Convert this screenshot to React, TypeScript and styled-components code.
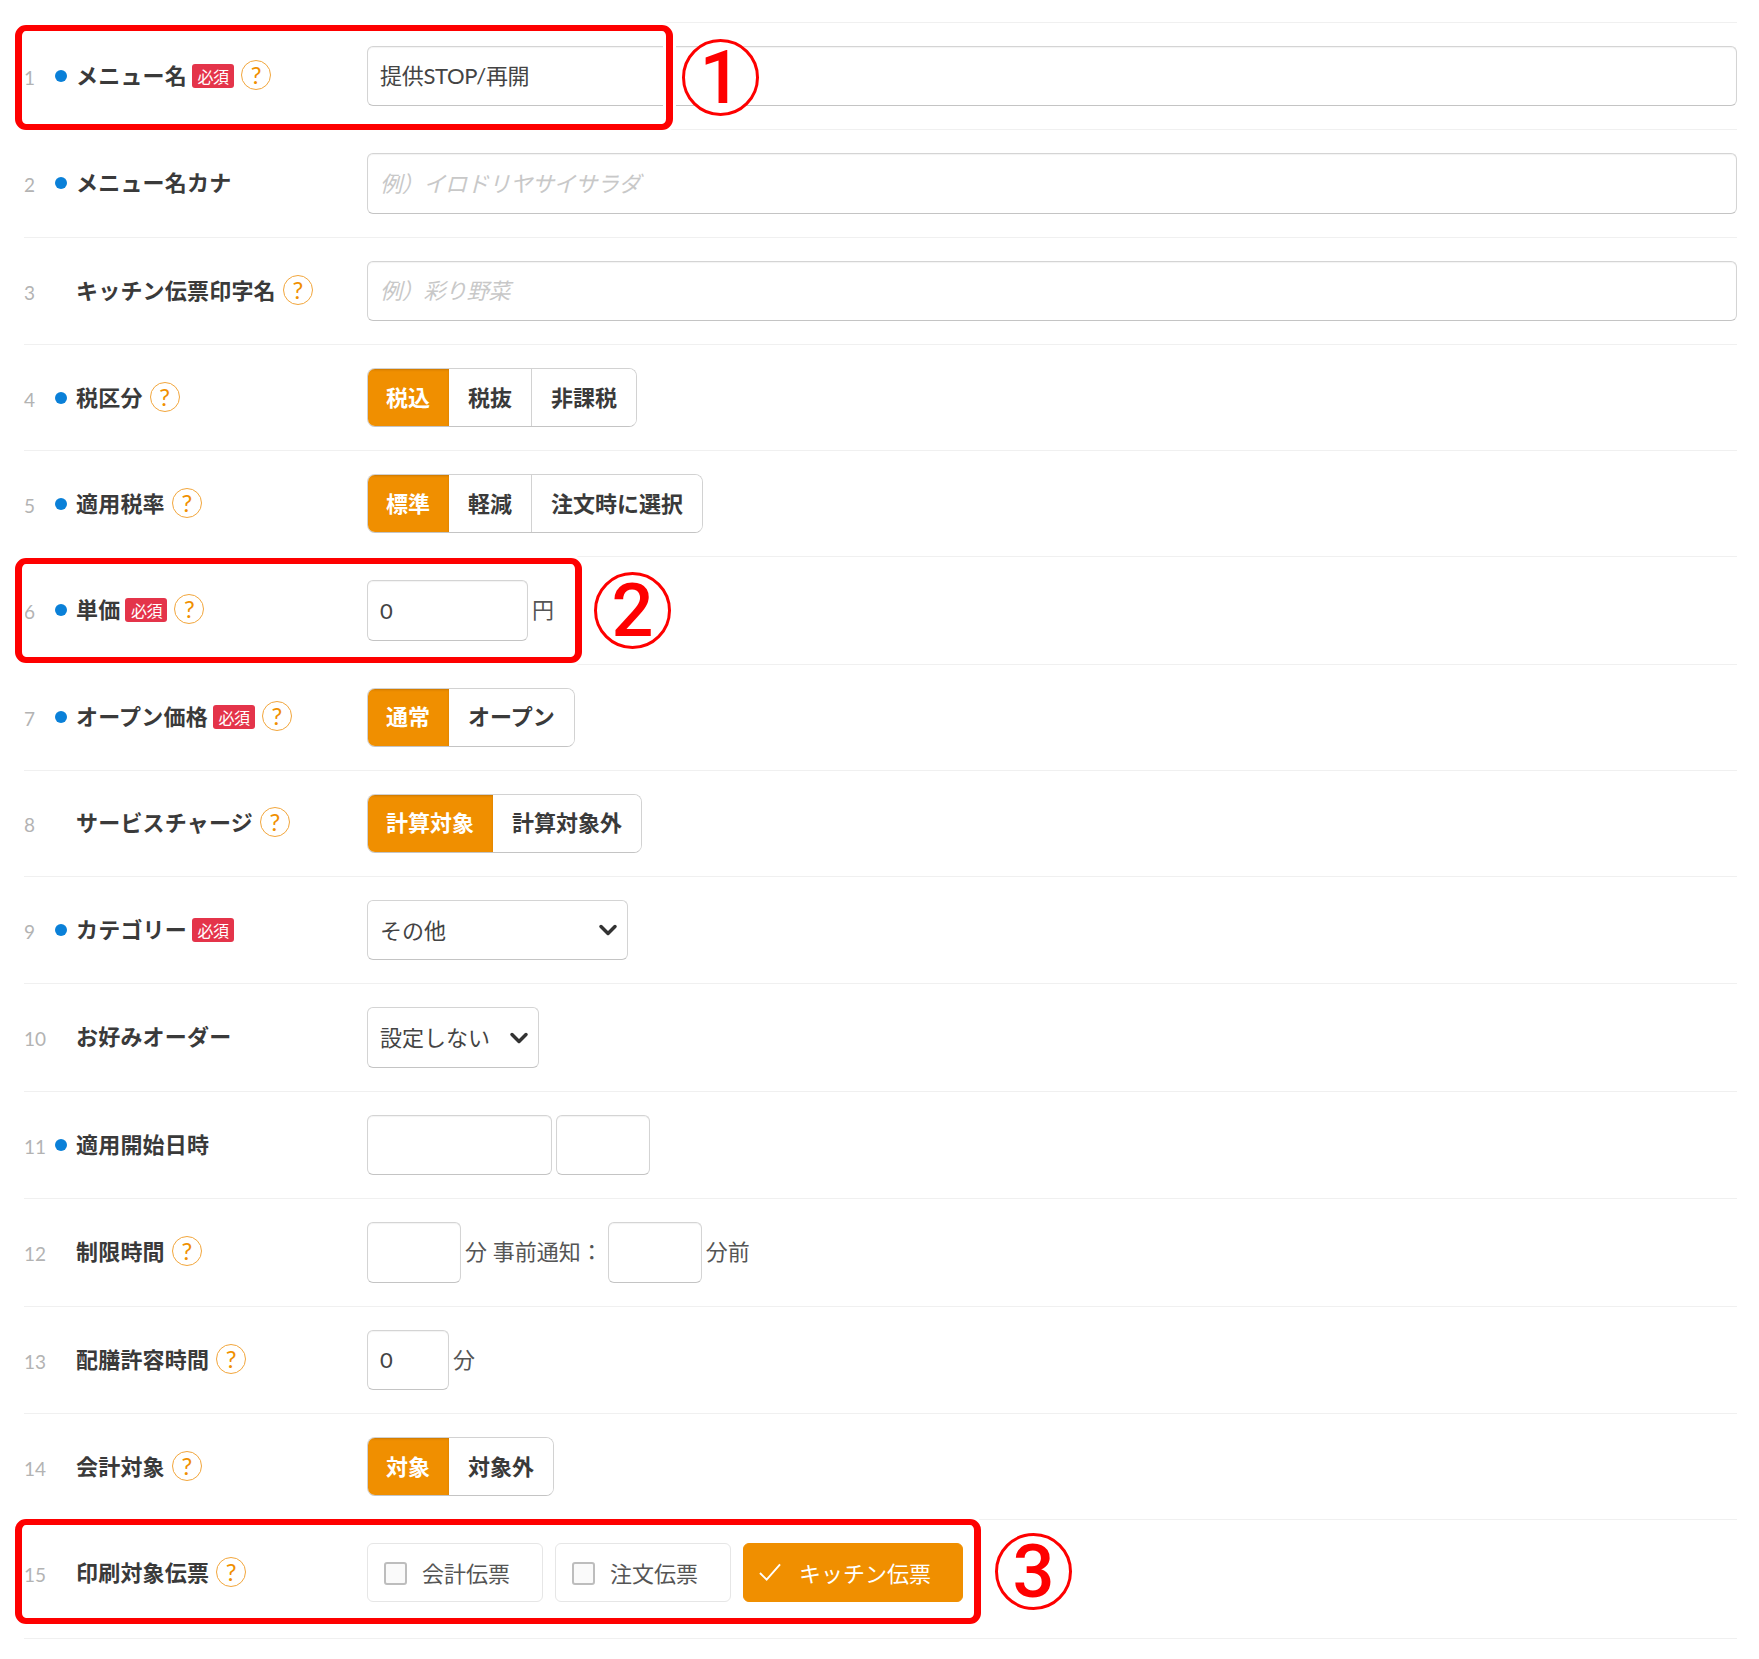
import styled, { createGlobalStyle } from "styled-components";
import { ChevronDown } from "lucide-react";

const GlobalStyle = createGlobalStyle`
  html, body {
    margin: 0;
    padding: 0;
    background-color: #fff;
  }

  body {
    font-family: "Lato", "Noto Sans CJK JP", sans-serif;
    color: #333;
    -webkit-font-smoothing: antialiased;
  }

  * {
    box-sizing: border-box;
  }
`;

const Page = styled.div`
  position: relative;
  width: 1759px;
  height: 1659px;
  padding: 21.5px 22px 0 24px;
  overflow: hidden;
`;

const FormList = styled.div`
  border-top: 1px solid #f0f0f0;
`;

const Row = styled.div<{ $last?: boolean }>`
  display: grid;
  grid-template-columns: 343px 1fr;
  align-items: center;
  padding: 23px 0 ${({ $last }) => ($last ? "35.5px" : "23px")};
  border-bottom: 1px solid #f0f0f0;
`;

const RowHead = styled.div`
  display: flex;
  align-items: center;
`;

const RowNumber = styled.span`
  width: 31px;
  flex-shrink: 0;
  padding-top: 3px;
  font-size: 19px;
  color: #b3b3b3;
`;

const Dot = styled.span<{ $on?: boolean }>`
  width: 12px;
  height: 12px;
  margin-right: 9px;
  flex-shrink: 0;
  border-radius: 50%;
  background-color: ${({ $on }) => ($on ? "#0a80d8" : "transparent")};
`;

const Label = styled.span`
  font-size: 22px;
  line-height: 30px;
  font-weight: 700;
  letter-spacing: 0.2px;
  color: #3a3a3a;
  white-space: nowrap;
`;

const Required = styled.span`
  width: 42px;
  height: 24px;
  margin-left: 5px;
  display: flex;
  align-items: center;
  justify-content: center;
  border-radius: 3px;
  background-color: #e4344a;
  color: #fff;
  font-size: 16px;
  letter-spacing: -0.5px;
`;

const Help = styled.span`
  width: 30px;
  height: 30px;
  margin: -2px 0 0 7px;
  display: flex;
  align-items: center;
  justify-content: center;
  border: 1px solid #f2a63c;
  border-radius: 50%;
  color: #f08f00;
  font-size: 24px;
  line-height: 1;
`;

const Controls = styled.div`
  display: flex;
  align-items: center;
`;

const TextInput = styled.input<{ $width?: number; $gap?: number; $raise?: boolean }>`
  display: block;
  width: ${({ $width }) => ($width ? `${$width}px` : "100%")};
  height: 60.5px;
  margin-left: ${({ $gap }) => $gap ?? 0}px;
  padding: 0 12px ${({ $raise }) => ($raise ? "4px" : "0")};
  border: 1px solid #d4d4d4;
  border-bottom-color: #c4c4c4;
  border-radius: 6px;
  background-color: #fff;
  box-shadow: inset 0 1px 1px rgba(0, 0, 0, 0.05);
  outline: none;
  font-family: inherit;
  font-size: 22px;
  line-height: 30px;
  letter-spacing: -0.3px;
  color: #444;

  &::placeholder {
    color: #c8c8c8;
    font-style: italic;
    opacity: 1;
  }
`;

const Unit = styled.span`
  margin-left: 4px;
  padding-bottom: 4px;
  font-size: 22px;
  color: #555;
  white-space: nowrap;
`;

const Segmented = styled.div`
  display: flex;
  height: 59px;
  border: 1px solid #d2d2d2;
  border-bottom-color: #c4c4c4;
  border-radius: 8px;
  overflow: hidden;
`;

const Segment = styled.button<{ $active?: boolean }>`
  padding: 0 19px 4px;
  margin: ${({ $active }) => ($active ? "-1px 0 -1px -1px" : "0")};
  border: none;
  border-left: ${({ $active }) => ($active ? "none" : "1px solid #d2d2d2")};
  background-color: ${({ $active }) => ($active ? "#f08f00" : "#fff")};
  box-shadow: ${({ $active }) => ($active ? "inset 0 2px 2px rgba(120, 70, 0, 0.3)" : "none")};
  color: ${({ $active }) => ($active ? "#fff" : "#3a3a3a")};
  font-family: inherit;
  font-size: 22px;
  font-weight: 700;
  white-space: nowrap;

  &:nth-child(2) {
    border-left: none;
  }
`;

const SelectBox = styled.div<{ $width: number }>`
  width: ${({ $width }) => $width}px;
  height: 60.5px;
  padding: 0 5px 2px 12px;
  display: flex;
  align-items: center;
  justify-content: space-between;
  border: 1px solid #d4d4d4;
  border-bottom-color: #c4c4c4;
  border-radius: 6px;
  font-size: 22px;
  color: #444;
`;

const SelectArrow = styled(ChevronDown)`
  margin-top: 3px;
  color: #333;
`;

const CheckChoice = styled.div<{ $checked?: boolean; $gap?: number }>`
  height: 59px;
  margin-left: ${({ $gap }) => $gap ?? 0}px;
  padding: 0 ${({ $checked }) => ($checked ? "31px" : "32px")} 1px ${({ $checked }) => ($checked ? "15px" : "16px")};
  display: flex;
  align-items: center;
  gap: ${({ $checked }) => ($checked ? "18px" : "15px")};
  border: 1px solid ${({ $checked }) => ($checked ? "#f08f00" : "#e6e6e6")};
  border-radius: 6px;
  background-color: ${({ $checked }) => ($checked ? "#f08f00" : "#fff")};
  color: ${({ $checked }) => ($checked ? "#fff" : "#555")};
  font-size: 22px;
`;

const CheckSquare = styled.span`
  width: 23px;
  height: 23px;
  margin-top: 2px;
  border: 2px solid #bdbdbd;
  border-radius: 3px;
  background-color: #fafafa;
`;

const Highlight = styled.div<{ $left: number; $top: number; $width: number; $height: number }>`
  position: absolute;
  left: ${({ $left }) => $left}px;
  top: ${({ $top }) => $top}px;
  width: ${({ $width }) => $width}px;
  height: ${({ $height }) => $height}px;
  border-style: solid;
  border-color: #fe0000;
  border-width: 6px 7px;
  border-radius: 11px;
  box-shadow: 0 0 0 3px #fff, inset 0 0 0 3px #fff;
`;

const Marker = styled.div<{ $left: number; $top: number }>`
  position: absolute;
  left: ${({ $left }) => $left}px;
  top: ${({ $top }) => $top}px;
  width: 77px;
  height: 77px;
  display: flex;
  align-items: center;
  justify-content: center;
  border: 3px solid #fe0000;
  border-radius: 50%;
  background-color: #fff;
  color: #fe0000;
  font-family: "Roboto", sans-serif;
  font-size: 74px;
  font-weight: 500;
  line-height: 1;
`;

type HeadProps = {
  no: number;
  dot?: boolean;
  label: string;
  required?: boolean;
  help?: boolean;
};

const Head = ({ no, dot, label, required, help }: HeadProps) => (
  <RowHead>
    <RowNumber>{no}</RowNumber>
    <Dot $on={dot} />
    <Label>{label}</Label>
    {required && <Required>必須</Required>}
    {help && <Help>?</Help>}
  </RowHead>
);

const Options = ({ items }: { items: string[] }) => (
  <Segmented>
    {items.map((item, i) => (
      <Segment key={item} $active={i === 0}>
        {item}
      </Segment>
    ))}
  </Segmented>
);

export default function App() {
  return (
    <Page>
      <GlobalStyle />
      <FormList>
        <Row>
          <Head no={1} dot label="メニュー名" required help />
          <TextInput $raise defaultValue="提供STOP/再開" />
        </Row>
        <Row>
          <Head no={2} dot label="メニュー名カナ" />
          <TextInput placeholder="例）イロドリヤサイサラダ" />
        </Row>
        <Row>
          <Head no={3} label="キッチン伝票印字名" help />
          <TextInput placeholder="例）彩り野菜" />
        </Row>
        <Row>
          <Head no={4} dot label="税区分" help />
          <Controls>
            <Options items={["税込", "税抜", "非課税"]} />
          </Controls>
        </Row>
        <Row>
          <Head no={5} dot label="適用税率" help />
          <Controls>
            <Options items={["標準", "軽減", "注文時に選択"]} />
          </Controls>
        </Row>
        <Row>
          <Head no={6} dot label="単価" required help />
          <Controls>
            <TextInput $width={161} defaultValue="0" />
            <Unit>円</Unit>
          </Controls>
        </Row>
        <Row>
          <Head no={7} dot label="オープン価格" required help />
          <Controls>
            <Options items={["通常", "オープン"]} />
          </Controls>
        </Row>
        <Row>
          <Head no={8} label="サービスチャージ" help />
          <Controls>
            <Options items={["計算対象", "計算対象外"]} />
          </Controls>
        </Row>
        <Row>
          <Head no={9} dot label="カテゴリー" required />
          <Controls>
            <SelectBox $width={261}>
              その他
              <SelectArrow size={28} strokeWidth={3} />
            </SelectBox>
          </Controls>
        </Row>
        <Row>
          <Head no={10} label="お好みオーダー" />
          <Controls>
            <SelectBox $width={172}>
              設定しない
              <SelectArrow size={28} strokeWidth={3} />
            </SelectBox>
          </Controls>
        </Row>
        <Row>
          <Head no={11} dot label="適用開始日時" />
          <Controls>
            <TextInput $width={185} />
            <TextInput $width={94} $gap={4} />
          </Controls>
        </Row>
        <Row>
          <Head no={12} label="制限時間" help />
          <Controls>
            <TextInput $width={94} />
            <Unit>分 事前通知：</Unit>
            <TextInput $width={94} $gap={5} />
            <Unit>分前</Unit>
          </Controls>
        </Row>
        <Row>
          <Head no={13} label="配膳許容時間" help />
          <Controls>
            <TextInput $width={82} defaultValue="0" />
            <Unit>分</Unit>
          </Controls>
        </Row>
        <Row>
          <Head no={14} label="会計対象" help />
          <Controls>
            <Options items={["対象", "対象外"]} />
          </Controls>
        </Row>
        <Row $last>
          <Head no={15} label="印刷対象伝票" help />
          <Controls>
            <CheckChoice>
              <CheckSquare />
              会計伝票
            </CheckChoice>
            <CheckChoice $gap={12}>
              <CheckSquare />
              注文伝票
            </CheckChoice>
            <CheckChoice $checked $gap={12}>
              <svg width="22" height="20" viewBox="0 0 23 20" fill="none">
                <path d="M1 11 L8 18 L22 2" stroke="#fff" strokeWidth="2" />
              </svg>
              キッチン伝票
            </CheckChoice>
          </Controls>
        </Row>
      </FormList>

      <Highlight $left={15} $top={25} $width={658} $height={105} />
      <Highlight $left={15} $top={558} $width={567} $height={105} />
      <Highlight $left={15} $top={1519} $width={966} $height={105} />
      <Marker $left={682} $top={39}>1</Marker>
      <Marker $left={594} $top={572}>2</Marker>
      <Marker $left={995} $top={1533}>3</Marker>
    </Page>
  );
}
